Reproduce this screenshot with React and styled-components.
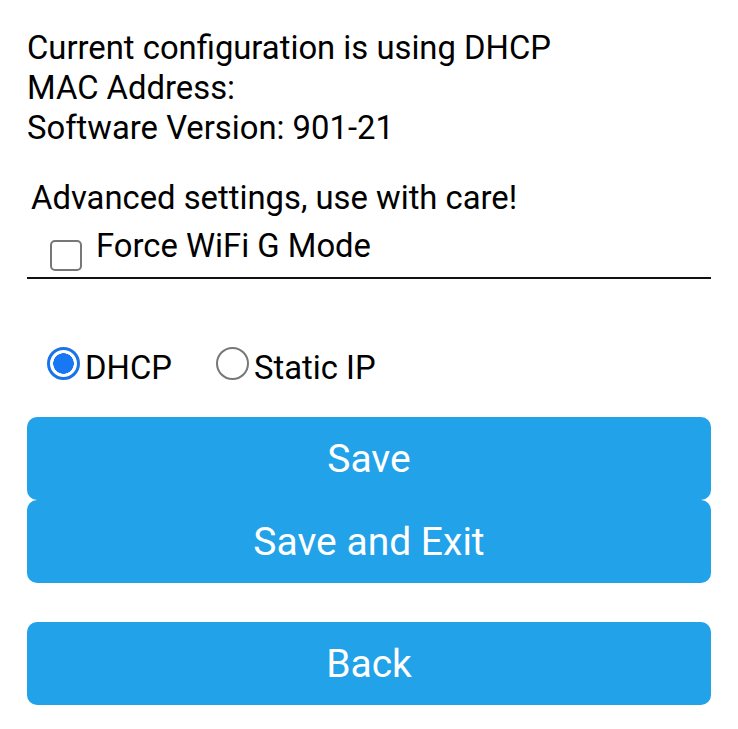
import React, { useState } from "react";
import styled, { createGlobalStyle } from "styled-components";

const GlobalStyle = createGlobalStyle`
    body {
        margin: 0;
        background: #fff;
        font-family: Roboto, "Liberation Sans", sans-serif;
        color: #000;
    }
`;

export default function App() {
    const [mode, setMode] = useState("dhcp");
    const [forceG, setForceG] = useState(false);

    return (
        <>
            <GlobalStyle />
            <Page>
                <Info>
                    <div>Current configuration is using DHCP</div>
                    <div>MAC Address:</div>
                    <div>Software Version: 901-21</div>
                </Info>
                <Advanced>
                    <Heading>Advanced settings, use with care!</Heading>
                    <CheckRow>
                        <Checkbox
                            type="checkbox"
                            checked={forceG}
                            onChange={() => setForceG(!forceG)}
                        />
                        <span>Force WiFi G Mode</span>
                    </CheckRow>
                </Advanced>
                <RadioGroup>
                    <Option>
                        <Radio
                            type="radio"
                            name="mode"
                            checked={mode === "dhcp"}
                            onChange={() => setMode("dhcp")}
                        />
                        <span>DHCP</span>
                    </Option>
                    <Option>
                        <Radio
                            type="radio"
                            name="mode"
                            checked={mode === "static"}
                            onChange={() => setMode("static")}
                        />
                        <span>Static IP</span>
                    </Option>
                </RadioGroup>
                <Button>Save</Button>
                <Button>Save and Exit</Button>
                <Button $spaced>Back</Button>
            </Page>
        </>
    );
}

const Page = styled.div`
    width: 684px;
    padding: 28px 27px 24px;
    display: flex;
    flex-direction: column;
`;

const Info = styled.div`
    font-size: 32.8px;
    line-height: 40px;
`;

const Advanced = styled.div`
    margin-top: 30px;
`;

const Heading = styled.div`
    font-size: 32.8px;
    line-height: 40px;
    padding-left: 4px;
`;

const CheckRow = styled.label`
    margin-top: 8px;
    display: flex;
    align-items: flex-start;
    font-size: 32.8px;
    line-height: 40px;
    padding-bottom: 6px;
    border-bottom: 2.5px solid #111;
    & span {
        margin-left: 14px;
    }
`;

const Checkbox = styled.input`
    appearance: none;
    margin: 14px 0 0 23px;
    width: 32px;
    height: 31px;
    box-sizing: border-box;
    border: 2px solid #777;
    border-radius: 5px;
    background: #fff;
`;

const RadioGroup = styled.div`
    margin-top: 69px;
    display: flex;
    align-items: flex-start;
    font-size: 32.8px;
    line-height: 40px;
`;

const Option = styled.label`
    display: flex;
    align-items: flex-start;
    margin-left: 20px;
    & + & {
        margin-left: 44px;
    }
    & span {
        margin-left: 5px;
    }
`;

const Radio = styled.input`
    appearance: none;
    margin: -1px 0 0 0;
    width: 33px;
    height: 33px;
    box-sizing: border-box;
    border-radius: 50%;
    border: 2px solid #777;
    background: #fff;
    &:checked {
        border: 3px solid #1a73e8;
        background: radial-gradient(circle, #1877f2 0 10px, #fff 10.5px);
    }
`;

const Button = styled.button`
    margin-top: ${(p) => (p.$spaced ? "39px" : "0")};
    height: 83px;
    width: 100%;
    border: none;
    border-radius: 10px;
    background: #21a2e9;
    color: #fff;
    font-family: Roboto, "Liberation Sans", sans-serif;
    font-size: 39px;
    padding: 0;
    &:first-of-type {
        margin-top: 29px;
    }
`;
